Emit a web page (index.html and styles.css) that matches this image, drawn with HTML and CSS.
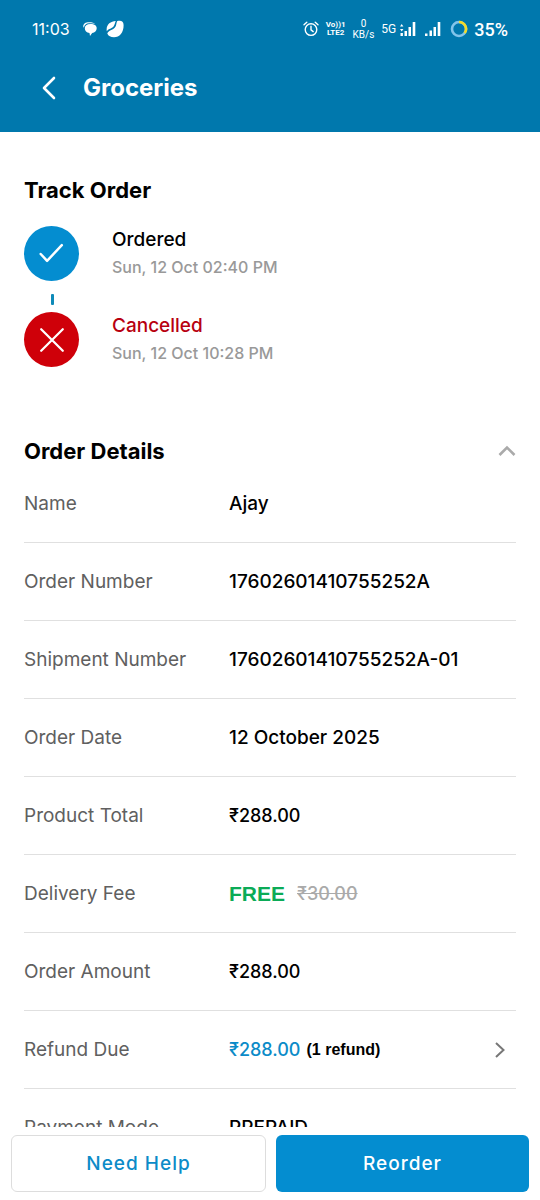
FILE: index.html
```html
<!DOCTYPE html>
<html lang="en">
<head>
<meta charset="utf-8">
<meta name="viewport" content="width=device-width, initial-scale=1">
<title>Groceries</title>
<link rel="stylesheet" href="styles.css">
</head>
<body>
<header class="header">
  <div class="status">
    <div class="status-left">
      <span class="time">11:03</span>
      <svg class="chat" width="14" height="14" viewBox="0 0 14 14" fill="currentColor"><path d="M.2 4.600C.2 1.800 2.500.3 6 .3c3.200 0 5.200.6 6.200 1.500C10.500 1.200 8.500 1.100 6 1.300 3.200 1.500 1.400 2.700.9 5.800z"/><path d="M7.500 2c4 0 6.200 1.600 6.200 4.200 0 2.500-1.900 4.400-4.500 4.800L7 13.900 6.500 11C3.500 10.600 1.800 8.800 1.800 6.300 1.800 3.600 3.700 2 7.500 2z"/></svg>
      <svg class="leaf" width="18" height="18" viewBox="0 0 18 18" fill="currentColor"><path d="M.8 11.200C-.3 5 4.200 1.200 9.800 1 8.700 3 9 4.500 7.500 6.400 5.500 8.800 3 8.200.8 11.200z"/><path d="M11.300.9C15 .2 17.500.8 17.600 5 17.800 12.500 13.500 17.300 8 17.300c-3.300 0-5.700-1.300-6.700-3.800C3 9.700 6.300 10.600 8.900 7.500 10.700 5.300 10 3 11.300.9z"/></svg>
    </div>
    <div class="status-right">
      <svg class="alarm" width="16" height="16" viewBox="0 0 16 16" fill="none" stroke="currentColor" stroke-width="1.400" stroke-linecap="round"><circle cx="8" cy="8.600" r="5.800"/><path d="M8 5.300v3.500l2.200 1.800M1 3.800 3.800 1.300M15 3.800 12.200 1.300"/></svg>
      <span class="stack volte"><span>Vo))1</span><span>LTE2</span></span>
      <span class="stack speed"><span>0</span><span>KB/s</span></span>
      <span class="network">5G</span>
      <svg class="bars-one" width="17" height="16" viewBox="0 0 17 16" fill="currentColor"><path d="M0 5.500 1.700 3l1.700 2.500zM0 8h3.400L1.700 10.500zM.5 12h2.400v3H.5zM4.500 10H7v5H4.500zM8.500 6H11v9H8.500zM12.700 1h2.600v14h-2.600z"/></svg>
      <svg class="bars-two" width="16" height="16" viewBox="0 0 16 16" fill="currentColor"><path d="M0 12.500h2.500V15H0zM4.500 9.500H7V15H4.500zM8.500 6H11v9H8.500zM12.700 1h2.600v14h-2.600z"/></svg>
      <svg class="ring" width="18" height="18" viewBox="0 0 18 18" fill="none" stroke-width="2.600"><circle cx="9" cy="9" r="7" stroke="#82c4ea"/><path d="M9 2a7 7 0 0 1 5.700 11.100" stroke="#f3dc28"/></svg>
      <span class="battery">35%</span>
    </div>
  </div>
  <div class="titlebar">
    <button class="back" type="button" aria-label="Back">
      <svg width="14" height="24" viewBox="0 0 14 24" fill="none" stroke="currentColor" stroke-width="2.600" stroke-linecap="round" stroke-linejoin="round"><path d="M12 2 2 12l10 10"/></svg>
    </button>
    <h1 class="title">Groceries</h1>
  </div>
</header>

<main class="content">
  <section class="track">
    <h2 class="heading">Track Order</h2>
    <ol class="steps">
      <li class="step">
        <span class="dot done"><svg viewBox="0 0 56 56" fill="none" stroke="currentColor" stroke-width="2.500" stroke-linecap="round" stroke-linejoin="round"><path d="M17 28.500 23.500 35.500 38.500 19.500"/></svg></span>
        <div class="step-text"><span class="step-name">Ordered</span><span class="step-date">Sun, 12 Oct 02:40 PM</span></div>
      </li>
      <li class="step">
        <span class="dot failed"><svg viewBox="0 0 56 56" fill="none" stroke="currentColor" stroke-width="2.300" stroke-linecap="round"><path d="M17.500 17.500l22 22M39.500 17.500l-22 22"/></svg></span>
        <div class="step-text"><span class="step-name cancelled">Cancelled</span><span class="step-date">Sun, 12 Oct 10:28 PM</span></div>
      </li>
    </ol>
  </section>

  <section class="details">
    <div class="details-head">
      <h2 class="heading">Order Details</h2>
      <button class="toggle" type="button" aria-label="Collapse order details">
        <svg width="18" height="12" viewBox="0 0 18 12" fill="none" stroke="currentColor" stroke-width="2.600"><path d="M1.500 10 9 2.500l7.500 7.500"/></svg>
      </button>
    </div>
    <dl class="rows">
      <div class="row"><dt>Name</dt><dd>Ajay</dd></div>
      <div class="row"><dt>Order Number</dt><dd>17602601410755252A</dd></div>
      <div class="row"><dt>Shipment Number</dt><dd>17602601410755252A-01</dd></div>
      <div class="row"><dt>Order Date</dt><dd>12 October 2025</dd></div>
      <div class="row"><dt>Product Total</dt><dd class="amount">₹288.00</dd></div>
      <div class="row"><dt>Delivery Fee</dt><dd class="amount"><strong class="free">FREE</strong><s class="old-fee">₹30.00</s></dd></div>
      <div class="row"><dt>Order Amount</dt><dd class="amount">₹288.00</dd></div>
      <div class="row"><dt>Refund Due</dt><dd class="amount"><a class="refund-link" href="#refund">₹288.00</a><span class="refund-count">(1 refund)</span>
        <svg class="chevron" width="10" height="16" viewBox="0 0 10 16" fill="none" stroke="currentColor" stroke-width="2"><path d="M1 1l7.500 7L1 15"/></svg></dd></div>
      <div class="row"><dt>Payment Mode</dt><dd>PREPAID</dd></div>
    </dl>
  </section>
</main>

<footer class="actions">
  <button class="action outline" type="button">Need Help</button>
  <button class="action filled" type="button">Reorder</button>
</footer>
</body>
</html>
```
FILE: styles.css
```css
* {
  box-sizing: border-box;
  margin: 0;
  padding: 0;
}

body {
  display: flex;
  flex-direction: column;
  height: 100vh;
  background: #fff;
  color: #000;
  font-family: Inter, "Liberation Sans", sans-serif;
  font-size: 19px;
  font-weight: 500;
}

button {
  border: 0;
  background: none;
  color: inherit;
  font: inherit;
  cursor: pointer;
}

svg {
  display: block;
  flex: none;
}

/* Header */
.header {
  flex: none;
  padding: 14px 32px 30px;
  background: #0078ad;
  color: #fff;
}

.status {
  display: flex;
  justify-content: space-between;
  align-items: center;
  height: 30px;
  font-family: Roboto, sans-serif;
  font-weight: 400;
}

.status-left,
.status-right {
  display: flex;
  align-items: center;
}

.time {
  font-family: Inter, sans-serif;
  font-size: 16px;
}

.chat {
  margin-left: 13px;
}

.leaf {
  margin-left: 9px;
}

.stack {
  display: flex;
  flex-direction: column;
  align-items: center;
}

.volte {
  margin-left: 7px;
  font-size: 8px;
  font-weight: 700;
  line-height: 8px;
}

.speed {
  margin-left: 7px;
  font-size: 10px;
  line-height: 11px;
}

.network {
  margin-left: 7px;
  font-size: 12px;
}

.bars-one {
  margin-left: 4px;
}

.bars-two {
  margin-left: 8px;
}

.ring {
  margin-left: 9px;
}

.battery {
  margin-left: 6px;
  font-size: 18px;
  font-weight: 500;
}

.titlebar {
  display: flex;
  align-items: center;
  gap: 27px;
  height: 58px;
  padding: 30px 0 0 10px;
}

.back {
  padding: 0;
}

.title {
  font-size: 24px;
  font-weight: 700;
  line-height: 28px;
}

/* Scrolling content */
.content {
  flex: 1;
  min-height: 0;
  overflow-y: auto;
  padding: 44px 24px 0;
  scrollbar-width: none;
}

.heading {
  font-size: 22px;
  font-weight: 700;
  line-height: 28px;
}

.steps {
  display: flex;
  flex-direction: column;
  gap: 30px;
  margin-top: 22px;
  list-style: none;
}

.step {
  display: flex;
  position: relative;
  gap: 33px;
  height: 56px;
}

.step + .step::before {
  content: "";
  position: absolute;
  top: -18px;
  left: 27px;
  width: 3px;
  height: 11px;
  border-radius: 1px;
  background: #0e8ab8;
}

.dot {
  flex: none;
  width: 55px;
  height: 55px;
  border-radius: 50%;
  color: #fff;
}

.done {
  background: #048dd0;
}

.failed {
  background: #cf0009;
}

.step-text {
  display: flex;
  flex-direction: column;
}

.step-name {
  line-height: 28px;
}

.cancelled {
  color: #b8000f;
}

.step-date {
  color: #999;
  font-size: 16px;
  line-height: 26px;
}

/* Order details */
.details {
  margin-top: 69px;
}

.details-head {
  display: flex;
  justify-content: space-between;
  align-items: center;
}

.toggle {
  color: #aaa;
}

.row {
  display: grid;
  grid-template-columns: 5fr 7fr;
  align-items: center;
  height: 78px;
  border-bottom: 1px solid #e0e0e0;
}

.row dt {
  color: #606060;
  font-weight: 400;
}

.row dd {
  display: flex;
  align-items: center;
}

.row .amount {
  font-size: 18px;
}

.free {
  color: #0bab57;
  font-family: "Liberation Sans", sans-serif;
  font-size: 21px;
  font-weight: 700;
}

.old-fee {
  margin-left: 12px;
  color: #aaa;
}

.refund-link {
  color: #0b8bc8;
  text-decoration: none;
}

.refund-count {
  margin-left: 6px;
  font-family: "Liberation Sans", sans-serif;
  font-size: 16px;
  font-weight: 700;
}

.chevron {
  margin-right: 11px;
  margin-left: auto;
  color: #777;
}

/* Bottom actions */
.actions {
  display: flex;
  flex: none;
  gap: 10px;
  padding: 8px 11px;
  background: #fff;
}

.action {
  flex: 1;
  height: 57px;
  border-radius: 6px;
  font-size: 19px;
  font-weight: 500;
  letter-spacing: 1px;
}

.outline {
  border: 1px solid #ddd;
  color: #0b8bc8;
}

.filled {
  background: #048dd0;
  color: #fff;
}
```
